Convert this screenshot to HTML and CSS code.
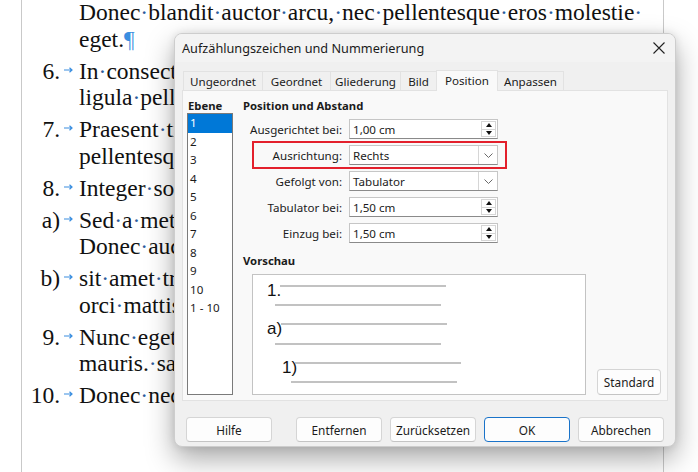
FILE: index.html
```html
<!DOCTYPE html>
<html lang="de">
<head>
<meta charset="utf-8">
<title>Aufzählungszeichen und Nummerierung</title>
<link rel="stylesheet" href="styles.css">
</head>
<body>
<div class="page">
  <div class="para first">
    <div class="num"></div><div class="arr"></div>
    <div class="lines">
      <div class="ln">Donec<span class="d">·</span>blandit<span class="d">·</span>auctor<span class="d">·</span>arcu,<span class="d">·</span>nec<span class="d">·</span>pellentesque<span class="d">·</span>eros<span class="d">·</span>molestie<span class="d">·</span></div>
      <div class="ln">eget.<span class="pil">¶</span></div>
    </div>
  </div>
  <div class="para">
    <div class="num">6.</div><div class="arr"><svg viewBox="0 0 9 6" class="ai"><path d="M0 3H8M5.5 0.8L8 3L5.5 5.2"/></svg></div>
    <div class="lines clip">
      <div class="ln">In<span class="d">·</span>consectetur<span class="d">·</span>dolor<span class="d">·</span>sit<span class="d">·</span>amet</div>
      <div class="ln">ligula<span class="d">·</span>pellentesque<span class="d">·</span>vel</div>
    </div>
  </div>
  <div class="para">
    <div class="num">7.</div><div class="arr"><svg viewBox="0 0 9 6" class="ai"><path d="M0 3H8M5.5 0.8L8 3L5.5 5.2"/></svg></div>
    <div class="lines clip">
      <div class="ln">Praesent<span class="d">·</span>tincidunt<span class="d">·</span>nisl</div>
      <div class="ln">pellentesque<span class="d">·</span>urna</div>
    </div>
  </div>
  <div class="para">
    <div class="num">8.</div><div class="arr"><svg viewBox="0 0 9 6" class="ai"><path d="M0 3H8M5.5 0.8L8 3L5.5 5.2"/></svg></div>
    <div class="lines clip">
      <div class="ln">Integer<span class="d">·</span>sodales<span class="d">·</span>tellus</div>
    </div>
  </div>
  <div class="para">
    <div class="num">a)</div><div class="arr"><svg viewBox="0 0 9 6" class="ai"><path d="M0 3H8M5.5 0.8L8 3L5.5 5.2"/></svg></div>
    <div class="lines clip">
      <div class="ln">Sed<span class="d">·</span>a<span class="d">·</span>metus<span class="d">·</span>vitae</div>
      <div class="ln">Donec<span class="d">·</span>auctor<span class="d">·</span>arcu</div>
    </div>
  </div>
  <div class="para">
    <div class="num">b)</div><div class="arr"><svg viewBox="0 0 9 6" class="ai"><path d="M0 3H8M5.5 0.8L8 3L5.5 5.2"/></svg></div>
    <div class="lines clip">
      <div class="ln">sit<span class="d">·</span>amet<span class="d">·</span>tristique</div>
      <div class="ln">orci<span class="d">·</span>mattis<span class="d">·</span>eget</div>
    </div>
  </div>
  <div class="para">
    <div class="num">9.</div><div class="arr"><svg viewBox="0 0 9 6" class="ai"><path d="M0 3H8M5.5 0.8L8 3L5.5 5.2"/></svg></div>
    <div class="lines clip">
      <div class="ln">Nunc<span class="d">·</span>eget<span class="d">·</span>lorem</div>
      <div class="ln">mauris.<span class="d">·</span>sapien</div>
    </div>
  </div>
  <div class="para">
    <div class="num">10.</div><div class="arr"><svg viewBox="0 0 9 6" class="ai"><path d="M0 3H8M5.5 0.8L8 3L5.5 5.2"/></svg></div>
    <div class="lines clip">
      <div class="ln">Donec<span class="d">·</span>nec<span class="d">·</span>justo</div>
    </div>
  </div>
</div>

<div class="dialog">
  <div class="titlebar">
    <span class="title">Aufzählungszeichen und Nummerierung</span>
    <svg class="close" viewBox="0 0 12 12"><path d="M0.5 0.5L11.5 11.5M11.5 0.5L0.5 11.5"/></svg>
  </div>
  <div class="tabs">
    <div class="tab w1">Ungeordnet</div>
    <div class="tab w2">Geordnet</div>
    <div class="tab w3">Gliederung</div>
    <div class="tab w4">Bild</div>
    <div class="tab w5 active">Position</div>
    <div class="tab w6">Anpassen</div>
  </div>
  <div class="panel">
    <div class="levels">
      <div class="head">Ebene</div>
      <div class="list">
        <div class="item sel">1</div>
        <div class="item">2</div>
        <div class="item">3</div>
        <div class="item">4</div>
        <div class="item">5</div>
        <div class="item">6</div>
        <div class="item">7</div>
        <div class="item">8</div>
        <div class="item">9</div>
        <div class="item">10</div>
        <div class="item">1 - 10</div>
      </div>
    </div>
    <div class="main">
      <div class="head">Position und Abstand</div>
      <div class="form">
        <div class="row">
          <label class="lbl">Ausgerichtet bei:</label>
          <div class="field"><span class="val">1,00 cm</span><div class="spin"><div class="up"><i></i></div><div class="dn"><i></i></div></div></div>
        </div>
        <div class="row">
          <label class="lbl">Ausrichtung:</label>
          <div class="field combo"><span class="val">Rechts</span><div class="drop"><svg viewBox="0 0 9 5"><path d="M0.5 0.5L4.5 4.5L8.5 0.5"/></svg></div></div>
        </div>
        <div class="row">
          <label class="lbl">Gefolgt von:</label>
          <div class="field combo"><span class="val">Tabulator</span><div class="drop"><svg viewBox="0 0 9 5"><path d="M0.5 0.5L4.5 4.5L8.5 0.5"/></svg></div></div>
        </div>
        <div class="row">
          <label class="lbl">Tabulator bei:</label>
          <div class="field"><span class="val">1,50 cm</span><div class="spin"><div class="up"><i></i></div><div class="dn"><i></i></div></div></div>
        </div>
        <div class="row">
          <label class="lbl">Einzug bei:</label>
          <div class="field"><span class="val">1,50 cm</span><div class="spin"><div class="up"><i></i></div><div class="dn"><i></i></div></div></div>
        </div>
      </div>
      <div class="head vhead">Vorschau</div>
      <div class="previewrow">
        <div class="preview">
          <svg viewBox="0 0 334 121" width="334" height="121">
            <text x="15" y="22" class="pt">1.</text>
            <line x1="28" y1="12" x2="194" y2="12" class="pl"/>
            <line x1="23" y1="31" x2="189" y2="31" class="pl"/>
            <text x="15" y="60" class="pt">a)</text>
            <line x1="29" y1="50" x2="195" y2="50" class="pl"/>
            <line x1="23" y1="70" x2="189" y2="70" class="pl"/>
            <text x="30" y="99" class="pt">1)</text>
            <line x1="43" y1="89" x2="209" y2="89" class="pl"/>
            <line x1="39" y1="108" x2="205" y2="108" class="pl"/>
          </svg>
        </div>
        <div class="btn std">Standard</div>
      </div>
    </div>
    <div class="highlight"></div>
  </div>
  <div class="buttons">
    <div class="btn">Hilfe</div>
    <div class="btn push">Entfernen</div>
    <div class="btn">Zurücksetzen</div>
    <div class="btn ok">OK</div>
    <div class="btn">Abbrechen</div>
  </div>
</div>
</body>
</html>
```

FILE: styles.css
```css
html, body {
  margin: 0;
  padding: 0;
  background: #ffffff;
  width: 698px;
  height: 472px;
  overflow: hidden;
}

.page {
  margin-left: 21px;
  width: 641px;
  height: 472px;
  border-left: 1px solid #c9c9c9;
  border-right: 1px solid #c9c9c9;
  background: #ffffff;
  font-family: "Liberation Serif", "Times New Roman", serif;
  font-size: 23.5px;
  line-height: 26.6px;
  color: #111111;
  overflow: hidden;
}

.para {
  display: grid;
  grid-template-columns: 38px 19px 1fr;
  margin-top: 5.4px;
}
.para.first {
  margin-top: -1px;
}
.num {
  text-align: right;
  white-space: nowrap;
}
.arr {
  padding-left: 4px;
  display: flex;
  align-items: flex-start;
  padding-top: 9px;
}
.ai {
  width: 9px;
  height: 6px;
  fill: none;
  stroke: #3a8ee0;
  stroke-width: 1.2;
}
.lines {
  min-width: 0;
}
.lines.clip {
  width: 95px;
  overflow: hidden;
}
.ln {
  white-space: nowrap;
}
.d {
  color: #2b5c9c;
}
.pil {
  color: #3a8ee0;
}

/* dialog */
.dialog {
  position: absolute;
  left: 174px;
  top: 33px;
  width: 500px;
  height: 412px;
  background: #f0f0f0;
  border: 1px solid #cdcdcd;
  border-radius: 8px;
  box-shadow: 0 12px 28px rgba(0, 0, 0, 0.34), 0 0 9px rgba(0, 0, 0, 0.1);
  font-family: "Noto Sans", "Open Sans", sans-serif;
  font-size: 11.3px;
  color: #1b1b1b;
  overflow: hidden;
}

.titlebar {
  height: 28px;
  padding: 0 10px 0 7px;
  display: flex;
  align-items: center;
  justify-content: space-between;
  background: #f3f3f3;
}
.title {
  font-size: 12.7px;
}
.close {
  width: 12px;
  height: 12px;
  fill: none;
  stroke: #222;
  stroke-width: 1.1;
}

.tabs {
  display: flex;
  margin: 8px 0 0 8px;
  height: 20px;
  align-items: flex-end;
}
.tab {
  height: 19px;
  line-height: 19px;
  text-align: center;
  border: 1px solid #e2e2e2;
  border-bottom: none;
  margin-right: -1px;
  background: #f0f0f0;
  box-sizing: border-box;
  font-size: 11.6px;
}
.tab.active {
  background: #f9f9f9;
  height: 21px;
  line-height: 20px;
  position: relative;
  z-index: 2;
  margin-bottom: -1px;
}
.w1 { width: 80px; }
.w2 { width: 69px; }
.w3 { width: 71px; }
.w4 { width: 37px; }
.w5 { width: 62px; }
.w6 { width: 67px; }

.panel {
  position: relative;
  margin: 0 7px 0 7px;
  height: 311px;
  box-sizing: border-box;
  background: #f9f9f9;
  border: 1px solid #e2e2e2;
  display: flex;
  padding: 7px 0 0 4px;
}

.head {
  font-weight: bold;
  line-height: 15px;
  height: 15px;
}
.levels .head {
  padding-left: 1px;
}
.list {
  width: 46px;
  height: 282px;
  box-sizing: border-box;
  border: 1px solid #7a7a7a;
  background: #ffffff;
}
.item {
  height: 18.5px;
  line-height: 18.5px;
  padding-left: 2px;
  white-space: nowrap;
  font-size: 11.6px;
}
.item.sel {
  background: #0078d7;
  color: #ffffff;
}

.main {
  margin-left: 10px;
}
.form {
  margin-top: 6px;
  display: flex;
  flex-direction: column;
  gap: 6px;
}
.row {
  display: flex;
  align-items: center;
  height: 20px;
}
.lbl {
  width: 99px;
  text-align: right;
  margin-right: 7px;
  white-space: nowrap;
  font-size: 11.6px;
}
.field {
  width: 149px;
  height: 20px;
  box-sizing: border-box;
  background: #ffffff;
  border: 1px solid #c6c6c6;
  border-bottom-color: #8a8a8a;
  display: flex;
  align-items: center;
  font-size: 11.6px;
}
.val {
  padding-left: 3px;
  flex: 1;
}
.spin {
  width: 15px;
  height: 16px;
  margin-right: 1px;
  display: flex;
  flex-direction: column;
  border: 1px solid #d6d6d6;
  box-sizing: border-box;
}
.spin .up, .spin .dn {
  flex: 1;
  display: flex;
  align-items: center;
  justify-content: center;
}
.spin .up {
  border-bottom: 1px solid #d6d6d6;
}
.spin .up i {
  width: 0;
  height: 0;
  border-left: 3.5px solid transparent;
  border-right: 3.5px solid transparent;
  border-bottom: 4px solid #111;
}
.spin .dn i {
  width: 0;
  height: 0;
  border-left: 3.5px solid transparent;
  border-right: 3.5px solid transparent;
  border-top: 4px solid #111;
}
.drop {
  width: 18px;
  height: 18px;
  border-left: 1px solid #d6d6d6;
  display: flex;
  align-items: center;
  justify-content: center;
}
.drop svg {
  width: 9px;
  height: 5px;
  fill: none;
  stroke: #6a6a6a;
  stroke-width: 1;
}

.vhead {
  margin-top: 10px;
}
.previewrow {
  margin-top: 6px;
  display: flex;
  align-items: flex-end;
  padding-left: 9px;
}
.preview {
  width: 334px;
  height: 121px;
  box-sizing: border-box;
  background: #ffffff;
  border: 1px solid #c3c3c3;
  overflow: hidden;
}
.preview svg {
  display: block;
  margin: -1px 0 0 -1px;
}
.pt {
  font-family: "Liberation Sans", Arial, sans-serif;
  font-size: 17px;
  fill: #111;
}
.pl {
  stroke: #c2c2c2;
  stroke-width: 2;
}

.btn {
  height: 25px;
  width: 86px;
  flex: none;
  box-sizing: border-box;
  background: #fdfdfd;
  border: 1px solid #d5d5d5;
  border-bottom-color: #c4c4c4;
  border-radius: 4px;
  display: flex;
  align-items: center;
  justify-content: center;
  font-size: 11.8px;
}
.btn.std {
  width: 64px;
  height: 26px;
  margin-left: 11px;
}
.btn.ok {
  border: 1px solid #1a73c9;
}
.btn.push {
  margin-left: auto;
}

.highlight {
  position: absolute;
  left: 69px;
  top: 50px;
  width: 255px;
  height: 28px;
  box-sizing: border-box;
  border: 2px solid #e3202c;
}

.buttons {
  display: flex;
  gap: 8px;
  margin: 16px 11px 0 11px;
}
```
